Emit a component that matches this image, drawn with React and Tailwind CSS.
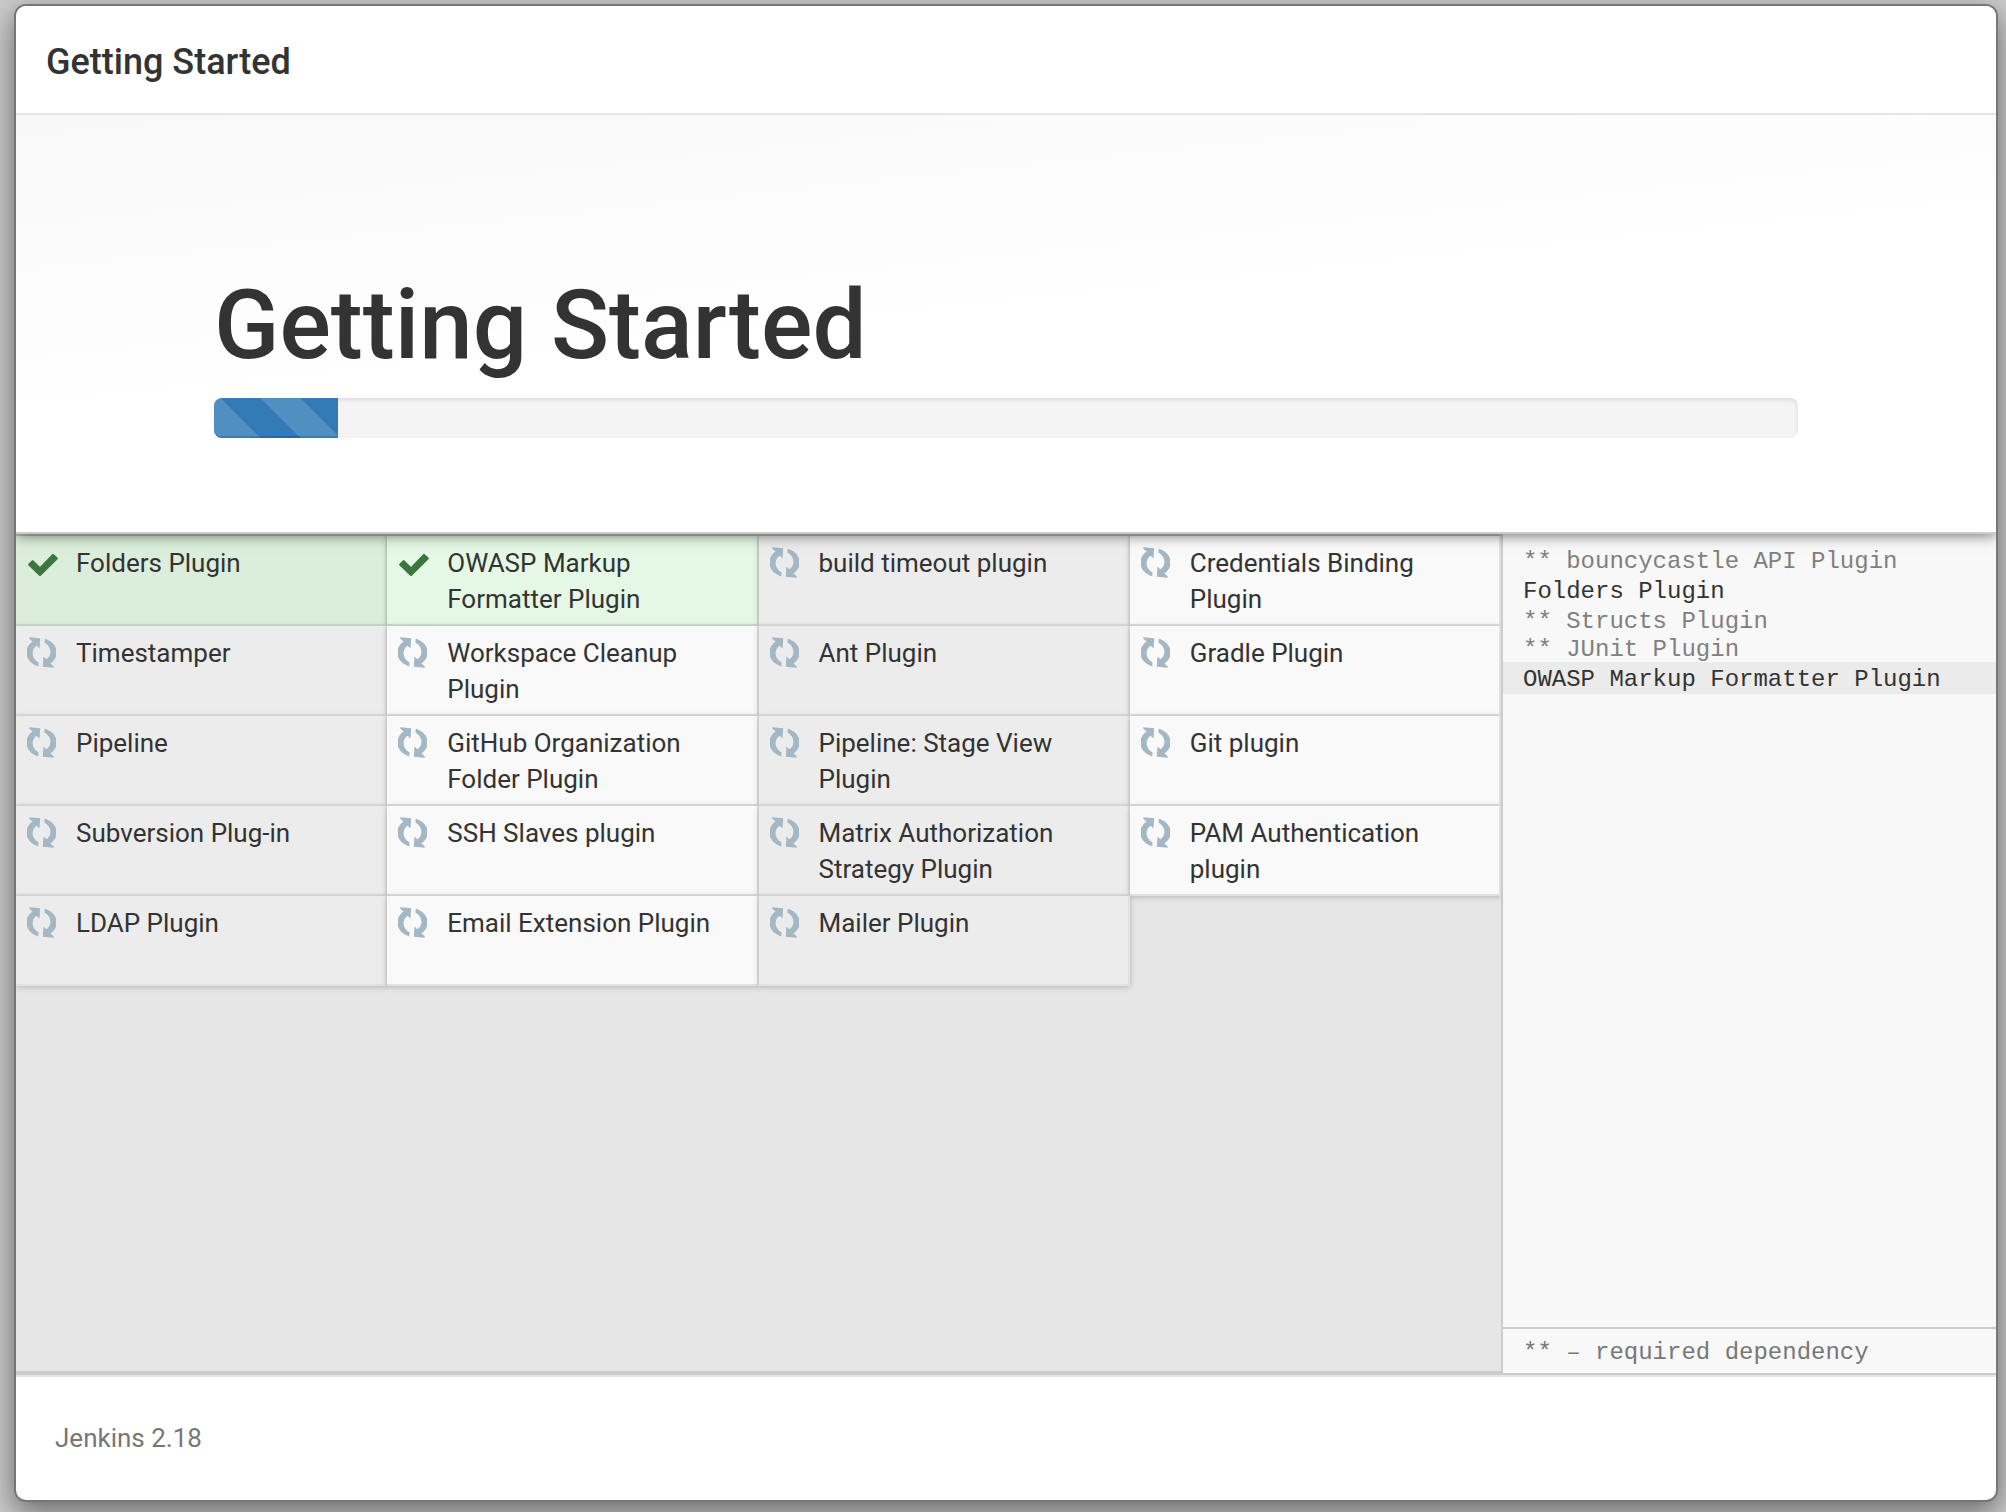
import clsx from "clsx";

const plugins = [
  { name: "Folders Plugin", done: true },
  { name: "OWASP Markup Formatter Plugin", done: true },
  { name: "build timeout plugin" },
  { name: "Credentials Binding Plugin" },
  { name: "Timestamper" },
  { name: "Workspace Cleanup Plugin" },
  { name: "Ant Plugin" },
  { name: "Gradle Plugin" },
  { name: "Pipeline" },
  { name: "GitHub Organization Folder Plugin" },
  { name: "Pipeline: Stage View Plugin" },
  { name: "Git plugin" },
  { name: "Subversion Plug-in" },
  { name: "SSH Slaves plugin" },
  { name: "Matrix Authorization Strategy Plugin" },
  { name: "PAM Authentication plugin" },
  { name: "LDAP Plugin" },
  { name: "Email Extension Plugin" },
  { name: "Mailer Plugin" },
];

const log = [
  { text: "** bouncycastle API Plugin", dependency: true },
  { text: "Folders Plugin" },
  { text: "** Structs Plugin", dependency: true },
  { text: "** JUnit Plugin", dependency: true },
  { text: "OWASP Markup Formatter Plugin", current: true },
];

const progress = 7.83;

function CheckIcon() {
  return (
    <svg viewBox="0 0 90 70" className="mt-2 ml-3 h-6 w-[30px]" aria-hidden="true">
      <path
        d="M4 34 L14 24 L36 46 L75 5 L86 15 L36 65 Z"
        fill="#3c763d"
        stroke="#3c763d"
        strokeWidth="7"
        strokeLinejoin="round"
      />
    </svg>
  );
}

function PendingIcon() {
  const arrow =
    "M7 0 L40 3 L38 34 L29 26 C12 38 12 64 35 77 L34 89 C-9 74 -12 33 17 13 L7 5 Z";

  return (
    <svg
      viewBox="0 0 88 93"
      className="mt-[2px] ml-[11px] h-[31px] w-[29px]"
      fill="#a4b7c4"
      aria-hidden="true"
    >
      <path d={arrow} />
      <path d={arrow} transform="rotate(180 44 46.5)" />
    </svg>
  );
}

function Plugin({ name, done, odd }) {
  return (
    <li
      className={clsx(
        "flex min-h-[90px] border-r-2 border-b-2 pt-[9px] pb-[7px] shadow-[0_1px_6px_rgba(0,0,0,0.22)]",
        done ? "border-[#cfe0cf]" : "border-[#e1e1e1]",
        done && odd && "bg-[#dbeedb]",
        done && !odd && "bg-[#e5f8e5]",
        !done && odd && "bg-[#ececec]",
        !done && !odd && "bg-[#f9f9f9]"
      )}
    >
      <div className="w-[60px] shrink-0">
        {done ? <CheckIcon /> : <PendingIcon />}
      </div>
      <span className="pr-10 text-[26px] leading-9">{name}</span>
    </li>
  );
}

export default function App() {
  return (
    <div className="flex min-h-screen flex-col bg-[#ccc] pt-1 pr-2 pb-[10px] pl-[14px] font-['Roboto',sans-serif] text-[#333]">
      <div className="flex flex-1 flex-col overflow-hidden rounded-xl border-2 border-[#777] bg-white shadow-[0_10px_30px_rgba(0,0,0,0.5)]">
        <header className="relative z-20 border-b-2 border-[#e5e5e5] bg-white px-[30px] pt-8 pb-[27px]">
          <h4 className="text-[36px] leading-[48px] font-medium">
            Getting Started
          </h4>
        </header>

        <section className="relative z-10 border-b-2 border-[#ccc] bg-[linear-gradient(174deg,#f8f8f8,#fff_50%)] px-[10%] pt-[157px] pb-[94px] shadow-[0_0_14px_rgba(0,0,0,0.65)]">
          <h1 className="text-[96px] leading-[106px] font-medium">
            Getting Started
          </h1>
          <div
            role="progressbar"
            aria-label="Plugin installation"
            aria-valuenow={progress}
            aria-valuemin={0}
            aria-valuemax={100}
            className="mt-5 h-10 overflow-hidden rounded-lg bg-[#f4f4f4] shadow-[inset_0_2px_4px_rgba(0,0,0,0.1)]"
          >
            <div
              className="h-full bg-[#337ab7] bg-[linear-gradient(45deg,rgba(255,255,255,0.15)_25%,transparent_25%,transparent_50%,rgba(255,255,255,0.15)_50%,rgba(255,255,255,0.15)_75%,transparent_75%)] bg-[length:80px_80px] bg-[position:47px_0] shadow-[inset_0_-2px_0_rgba(0,0,0,0.15)]"
              style={{ width: `${progress}%` }}
            />
          </div>
        </section>

        <main className="flex flex-1 border-b-2 border-[#ccc]">
          <div className="w-3/4 border-y-2 border-[#ccc] bg-[#e6e6e6]">
            <ul className="grid grid-cols-4">
              {plugins.map((plugin, i) => (
                <Plugin key={plugin.name} {...plugin} odd={i % 2 === 0} />
              ))}
            </ul>
          </div>

          <aside className="relative flex w-1/4 flex-col border-l-2 border-[#ccc] bg-[#f8f8f8] font-['Liberation_Mono',monospace] text-[24px]">
            <div className="flex-1 pt-3">
              {log.map((line) => (
                <div
                  key={line.text}
                  className={clsx(
                    "px-5 pt-1 whitespace-nowrap",
                    line.dependency ? "leading-6 text-[#808080]" : "leading-7",
                    line.current && "bg-[#ebebeb]"
                  )}
                >
                  {line.text}
                </div>
              ))}
            </div>
            <div className="border-t-2 border-[#ccc] px-5 pt-[10px] pb-[6px] leading-7 text-[#777]">
              ** – required dependency
            </div>
          </aside>
        </main>

        <footer className="border-t-2 border-[#e5e5e5] px-[39px] pt-[43px] pb-11 text-[26px] leading-9 text-[#777]">
          Jenkins 2.18
        </footer>
      </div>
    </div>
  );
}
